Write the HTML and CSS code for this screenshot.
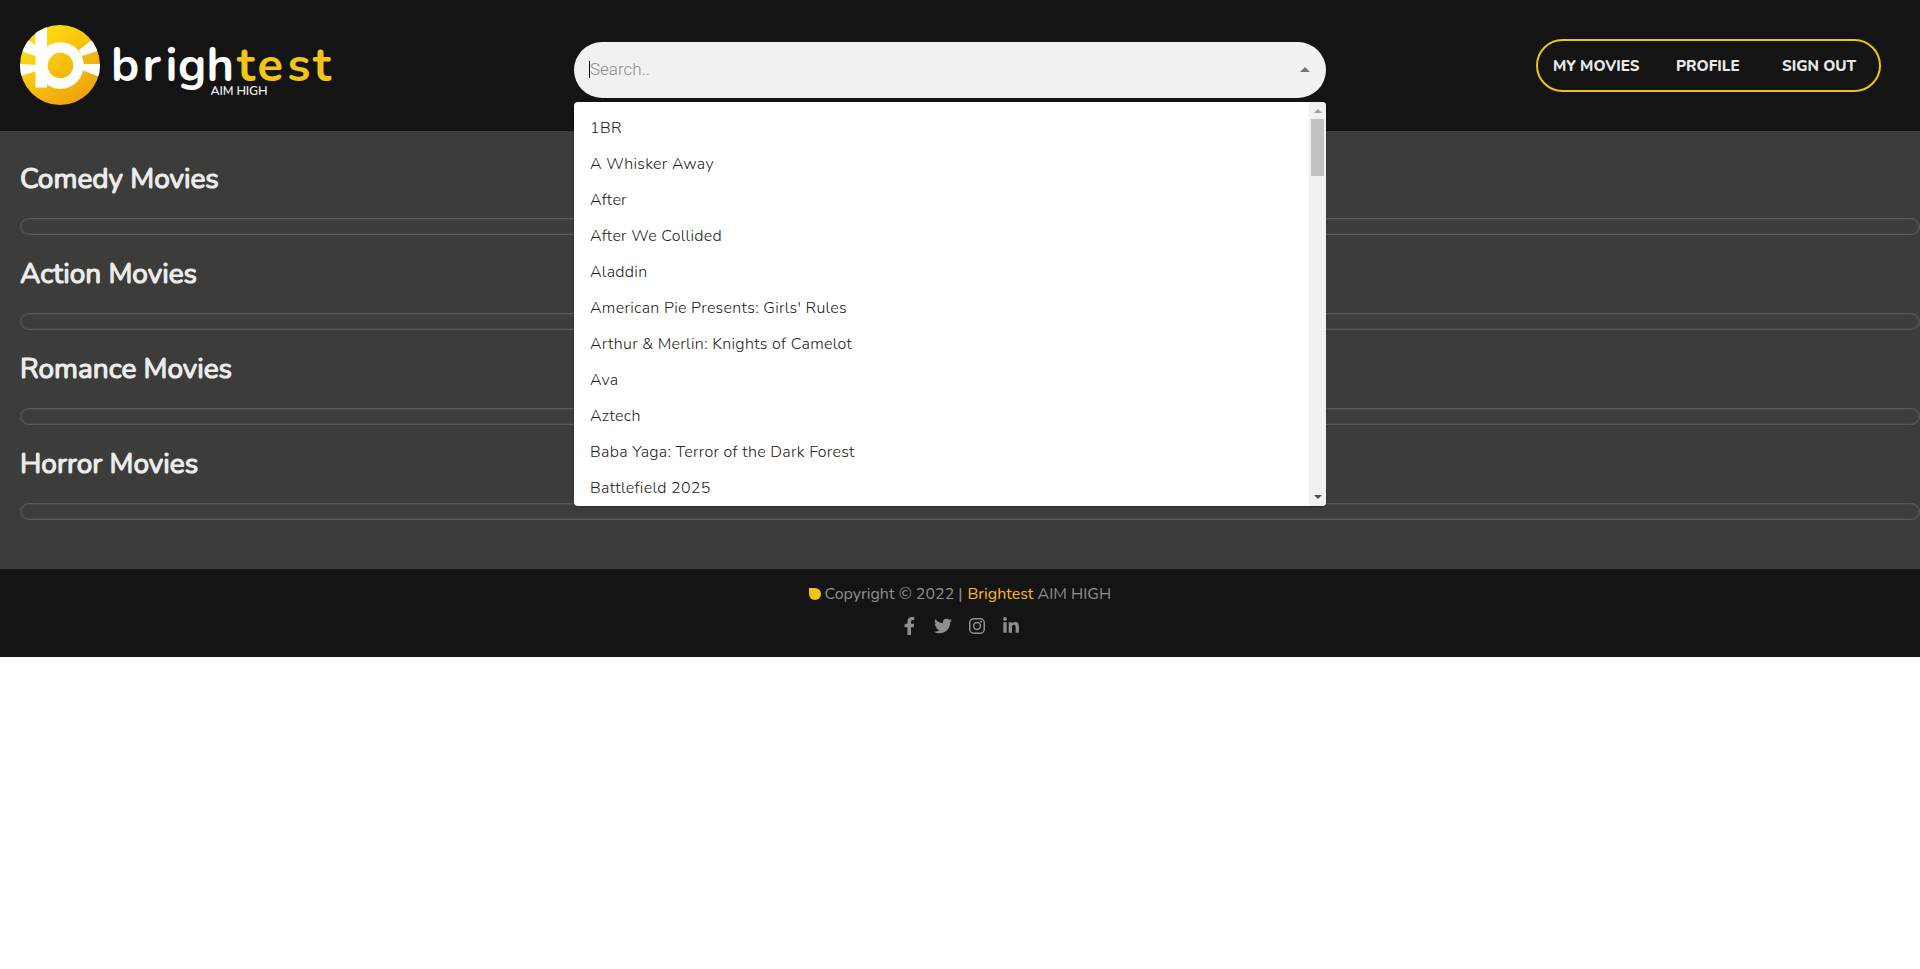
FILE: index.html
```
<!DOCTYPE html>
<html lang="en">
<head>
<meta charset="utf-8">
<title>Brightest</title>
<link rel="stylesheet" href="styles.css">
</head>
<body>
<header class="header">
  <svg class="logo" width="335" height="84" viewBox="18 23 335 84" role="img" aria-label="brightest">
    <defs>
      <linearGradient id="sun" x1="0.15" y1="0.1" x2="0.85" y2="0.95">
        <stop offset="0" stop-color="#ffdf10"/><stop offset="1" stop-color="#ee9f0d"/>
      </linearGradient>
      <clipPath id="disc"><circle cx="60" cy="65" r="40"/></clipPath>
    </defs>
    <g clip-path="url(#disc)">
      <rect x="20" y="25" width="80" height="80" fill="url(#sun)"/>
      <path fill="#fff" d="M35.500 34 38 28 47 24V48H35.500zM26 38 36 46V56L20 51zM18 64 37 65V71L18 77zM79 50 92 40 101 50 82 56zM83 64 102 64V78L82 70z"/>
      <rect x="35.500" y="30" width="11.500" height="57.500" fill="#fff"/>
      <circle cx="60.500" cy="65.500" r="18" fill="none" stroke="#fff" stroke-width="10.500"/>
    </g>
    <text class="word" y="80.500" fill="#fff" x="111 142.500 165.500 178 206.500">brigh</text>
    <text class="word" y="80.500" fill="#f3c613" x="237 257.500 287.500 313">test</text>
    <text class="tagline" x="210.500" y="95" textLength="57">AIM HIGH</text>
  </svg>
  <div class="search">
    <div class="field"><span class="caret"></span><span class="placeholder">Search..</span><span class="arrow"></span></div>
    <div class="menu">
      <ul class="options">
        <li>1BR</li><li>A Whisker Away</li><li>After</li><li>After We Collided</li><li>Aladdin</li>
        <li>American Pie Presents: Girls' Rules</li><li>Arthur &amp; Merlin: Knights of Camelot</li><li>Ava</li><li>Aztech</li>
        <li>Baba Yaga: Terror of the Dark Forest</li><li>Battlefield 2025</li>
      </ul>
      <div class="scrollbar"><span class="up"></span><span class="thumb"></span><span class="down"></span></div>
    </div>
  </div>
  <nav class="nav"><a class="movies">MY MOVIES</a><a class="profile">PROFILE</a><a class="signout">SIGN OUT</a></nav>
</header>
<main class="main">
  <section class="row"><h2>Comedy Movies</h2><div class="track"></div></section>
  <section class="row"><h2>Action Movies</h2><div class="track"></div></section>
  <section class="row"><h2>Romance Movies</h2><div class="track"></div></section>
  <section class="row"><h2>Horror Movies</h2><div class="track"></div></section>
</main>
<footer class="footer">
  <p class="copy"><span class="leaf"></span><span class="c1">Copyright © 2022 |</span><span class="brand">Brightest</span><span class="c2">AIM HIGH</span></p>
  <div class="social">
    <svg width="11" height="18" viewBox="22 0 280 512"><path d="M279.140 288l14.220-92.660h-88.910v-60.130c0-25.350 12.420-50.060 52.240-50.060h40.420V6.260S260.430 0 225.360 0c-73.220 0-121.080 44.380-121.080 124.720v70.620H22.890V288h81.390v224h100.170V288z"/></svg>
    <svg width="18" height="18" viewBox="0 0 512 512"><path d="M459.370 151.716c.325 4.548.325 9.097.325 13.645 0 138.720-105.583 298.558-298.558 298.558-59.452 0-114.680-17.219-161.137-47.106 8.447.974 16.568 1.299 25.340 1.299 49.055 0 94.213-16.568 130.274-44.832-46.132-.975-84.792-31.188-98.112-72.772 6.498.974 12.995 1.624 19.818 1.624 9.421 0 18.843-1.300 27.614-3.573-48.081-9.747-84.143-51.980-84.143-102.985v-1.299c13.969 7.797 30.214 12.670 47.431 13.319-28.264-18.843-46.781-51.005-46.781-87.391 0-19.492 5.197-37.360 14.294-52.954 51.655 63.675 129.300 105.258 216.365 109.807-1.624-7.797-2.599-15.918-2.599-24.040 0-57.828 46.782-104.934 104.934-104.934 30.213 0 57.502 12.670 76.670 33.137 23.715-4.548 46.456-13.320 66.599-25.340-7.798 24.366-24.366 44.833-46.132 57.827 21.117-2.273 41.584-8.122 60.426-16.243-14.292 20.791-32.161 39.308-52.628 54.253z"/></svg>
    <svg width="16" height="18" viewBox="0 0 16 18"><g fill="none" stroke="#8f8f8f"><rect x=".75" y="1.750" width="14.500" height="14.500" rx="4" stroke-width="1.500"/><circle cx="8" cy="9" r="3.400" stroke-width="1.500"/></g><circle cx="12.200" cy="4.800" r="1"/></svg>
    <svg width="16" height="18" viewBox="0 0 448 512"><path d="M100.280 448H7.400V148.900h92.880zM53.790 108.100C24.090 108.100 0 83.500 0 53.800a53.790 53.790 0 0 1 107.580 0c0 29.700-24.100 54.300-53.790 54.300zM447.900 448h-92.680V302.400c0-34.700-.7-79.200-48.290-79.200-48.290 0-55.690 37.700-55.690 76.700V448h-92.780V148.900h89.080v40.800h1.300c12.400-23.500 42.690-48.300 87.880-48.300 94 0 111.280 61.900 111.280 142.300V448z"/></svg>
  </div>
</footer>
</body>
</html>
```
FILE: styles.css
```
* { box-sizing: border-box; }
body { margin: 0; background: #fff; font-family: Nunito, Lato, sans-serif; }
.header { height: 131px; background: #141414; display: flex; align-items: flex-start; }
.logo { margin: 23px 221px 0 18px; flex: none; }
.word { font: 700 47px Nunito, sans-serif; }
.tagline { font: 600 12.5px Nunito, sans-serif; fill: #eee; }
.search { position: relative; width: 752px; margin-top: 42px; flex: none; }
.field { height: 56px; border-radius: 28px; background: #f1f1f1; display: flex; align-items: center; padding: 0 16px 2px 15px; }
.caret { width: 1px; height: 17px; background: #000; }
.placeholder { font: 300 17px Roboto, sans-serif; color: #8c8c8c; flex: 1; }
.arrow { border: 5px solid transparent; border-top: 0; border-bottom-color: #757575; }
.menu { position: absolute; z-index: 2; top: 60px; left: 0; width: 752px; height: 404px; background: #fff; border-radius: 4px; display: flex; overflow: hidden; box-shadow: 0 1px 2px rgba(0,0,0,.3); }
.options { list-style: none; margin: 0; padding: 8px 16px; flex: 1; height: 404px; overflow: hidden; }
.options li { height: 36px; line-height: 36px; font-size: 16px; font-weight: 300; color: #222; letter-spacing: .3px; white-space: nowrap; }
.scrollbar { width: 17px; background: #f1f1f1; display: flex; flex-direction: column; align-items: center; }
.up { border: 4px solid transparent; border-top: 0; border-bottom-color: #a3a3a3; margin: 7px 0 6px; }
.thumb { width: 13px; height: 57px; background: #c1c1c1; }
.down { border: 4px solid transparent; border-bottom: 0; border-top-color: #505050; margin: auto 0 7px; }
.nav { margin: 39px 0 0 210px; width: 345px; height: 53px; border: 2px solid #f1c40f; border-radius: 27px; display: flex; align-items: center; padding: 0 0 0 15px; font-weight: 800; font-size: 15.2px; color: #e8e8e8; white-space: nowrap; }
.movies { width: 123px; }
.profile { width: 106px; }
.main { height: 438px; background: #3c3c3a; padding: 23px 0 0 20px; }
.row { height: 95px; }
.row h2 { margin: 0; height: 64px; line-height: 51px; font-size: 28px; font-weight: 400; -webkit-text-stroke: 1.2px #ececec; color: #ececec; }
.track { height: 17px; border: 1px solid #5a5a59; border-radius: 9px; box-shadow: inset 0 0 3px #555; }
.footer { height: 88px; background: #141414; color: #8f8f8f; display: flex; flex-direction: column; align-items: center; }
.copy { margin: 13px 0 0; height: 24px; line-height: 24px; font-size: 16px; width: 303px; display: flex; align-items: center; white-space: nowrap; }
.leaf { width: 12px; height: 12px; background: #f1c40f; border-radius: 0 6px 6px 6px; margin-right: 4px; }
.c1 { width: 143px; }
.brand { color: #fcb913; width: 70px; }
.social { margin: 11px 0 0 2px; width: 115px; display: grid; grid-template-columns: 30px 35px 34px 16px; }
.social svg { fill: #8f8f8f; }
```
